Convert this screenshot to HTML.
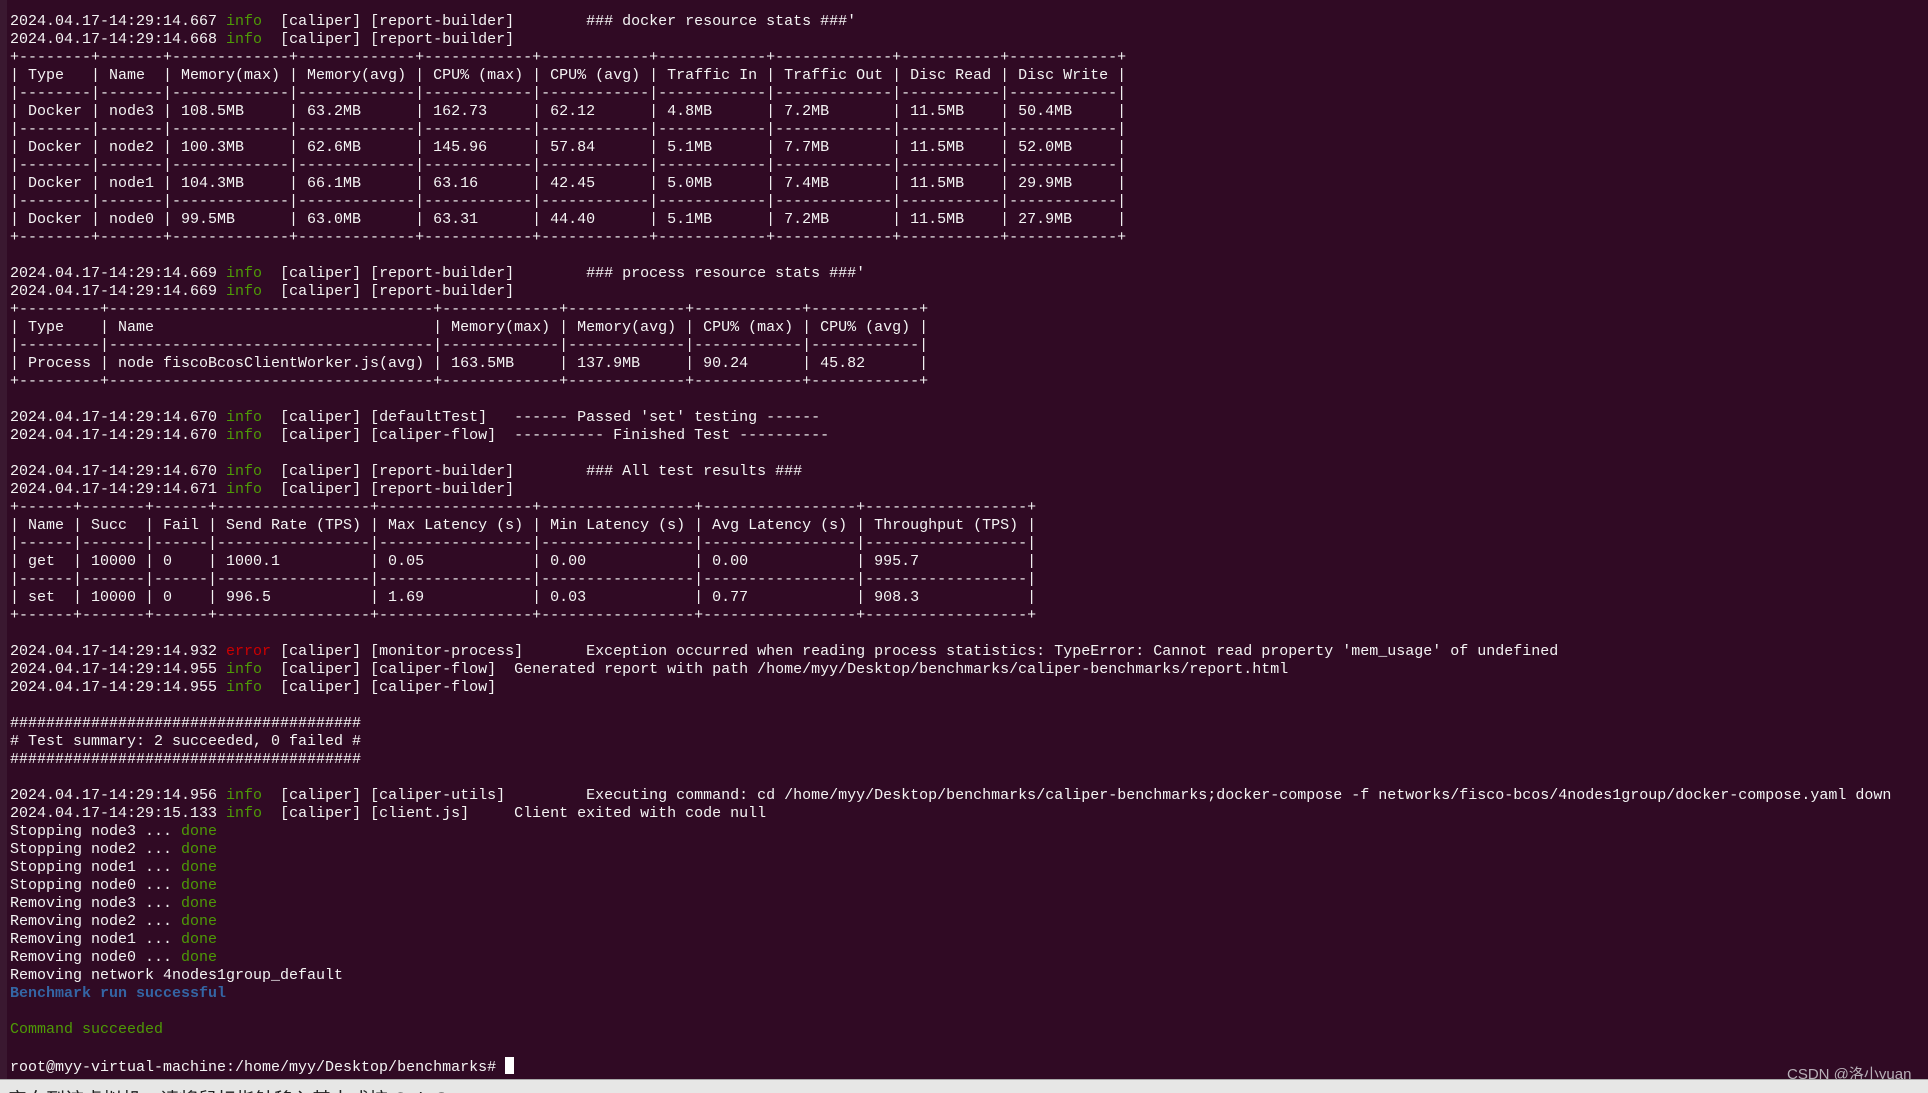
<!DOCTYPE html>
<html><head><meta charset="utf-8"><style>
html,body{margin:0;padding:0;}
body{width:1928px;height:1092px;background:#300a24;position:relative;overflow:hidden;}
.strip{position:absolute;left:0;top:0;width:7px;height:1080px;background:#3a1830;}
pre{position:absolute;left:10px;top:12.5px;margin:0;font-family:"Liberation Mono",monospace;font-size:15px;line-height:18px;color:#f4f4f4;white-space:pre;}
.g{color:#4e9a06}.r{color:#cc0000}.b{color:#3465a4;font-weight:bold}
.cur{display:inline-block;width:9px;height:17px;background:#fff;vertical-align:-3px;}
.bar{position:absolute;left:0;top:1079px;width:1928px;height:13px;background:#e7e7e6;border-top:1px solid #a8a8a8;overflow:hidden;}
.bar span{position:absolute;left:8px;top:5px;font-family:"Liberation Sans","Noto Sans CJK SC",sans-serif;font-size:19px;color:#222;white-space:nowrap;}
.wm{position:absolute;left:1787px;top:1063px;font-family:"Liberation Sans","Noto Sans CJK SC",sans-serif;font-size:15px;color:#b8b0b8;}
</style></head><body>
<div class="strip"></div>
<pre>2024.04.17-14:29:14.667 <span class="g">info</span>  [caliper] [report-builder]        ### docker resource stats ###'
2024.04.17-14:29:14.668 <span class="g">info</span>  [caliper] [report-builder]
+--------+-------+-------------+-------------+------------+------------+------------+-------------+-----------+------------+
| Type   | Name  | Memory(max) | Memory(avg) | CPU% (max) | CPU% (avg) | Traffic In | Traffic Out | Disc Read | Disc Write |
|--------|-------|-------------|-------------|------------|------------|------------|-------------|-----------|------------|
| Docker | node3 | 108.5MB     | 63.2MB      | 162.73     | 62.12      | 4.8MB      | 7.2MB       | 11.5MB    | 50.4MB     |
|--------|-------|-------------|-------------|------------|------------|------------|-------------|-----------|------------|
| Docker | node2 | 100.3MB     | 62.6MB      | 145.96     | 57.84      | 5.1MB      | 7.7MB       | 11.5MB    | 52.0MB     |
|--------|-------|-------------|-------------|------------|------------|------------|-------------|-----------|------------|
| Docker | node1 | 104.3MB     | 66.1MB      | 63.16      | 42.45      | 5.0MB      | 7.4MB       | 11.5MB    | 29.9MB     |
|--------|-------|-------------|-------------|------------|------------|------------|-------------|-----------|------------|
| Docker | node0 | 99.5MB      | 63.0MB      | 63.31      | 44.40      | 5.1MB      | 7.2MB       | 11.5MB    | 27.9MB     |
+--------+-------+-------------+-------------+------------+------------+------------+-------------+-----------+------------+

2024.04.17-14:29:14.669 <span class="g">info</span>  [caliper] [report-builder]        ### process resource stats ###'
2024.04.17-14:29:14.669 <span class="g">info</span>  [caliper] [report-builder]
+---------+------------------------------------+-------------+-------------+------------+------------+
| Type    | Name                               | Memory(max) | Memory(avg) | CPU% (max) | CPU% (avg) |
|---------|------------------------------------|-------------|-------------|------------|------------|
| Process | node fiscoBcosClientWorker.js(avg) | 163.5MB     | 137.9MB     | 90.24      | 45.82      |
+---------+------------------------------------+-------------+-------------+------------+------------+

2024.04.17-14:29:14.670 <span class="g">info</span>  [caliper] [defaultTest]   ------ Passed 'set' testing ------
2024.04.17-14:29:14.670 <span class="g">info</span>  [caliper] [caliper-flow]  ---------- Finished Test ----------

2024.04.17-14:29:14.670 <span class="g">info</span>  [caliper] [report-builder]        ### All test results ###
2024.04.17-14:29:14.671 <span class="g">info</span>  [caliper] [report-builder]
+------+-------+------+-----------------+-----------------+-----------------+-----------------+------------------+
| Name | Succ  | Fail | Send Rate (TPS) | Max Latency (s) | Min Latency (s) | Avg Latency (s) | Throughput (TPS) |
|------|-------|------|-----------------|-----------------|-----------------|-----------------|------------------|
| get  | 10000 | 0    | 1000.1          | 0.05            | 0.00            | 0.00            | 995.7            |
|------|-------|------|-----------------|-----------------|-----------------|-----------------|------------------|
| set  | 10000 | 0    | 996.5           | 1.69            | 0.03            | 0.77            | 908.3            |
+------+-------+------+-----------------+-----------------+-----------------+-----------------+------------------+

2024.04.17-14:29:14.932 <span class="r">error</span> [caliper] [monitor-process]       Exception occurred when reading process statistics: TypeError: Cannot read property 'mem_usage' of undefined
2024.04.17-14:29:14.955 <span class="g">info</span>  [caliper] [caliper-flow]  Generated report with path /home/myy/Desktop/benchmarks/caliper-benchmarks/report.html
2024.04.17-14:29:14.955 <span class="g">info</span>  [caliper] [caliper-flow]

#######################################
# Test summary: 2 succeeded, 0 failed #
#######################################

2024.04.17-14:29:14.956 <span class="g">info</span>  [caliper] [caliper-utils]         Executing command: cd /home/myy/Desktop/benchmarks/caliper-benchmarks;docker-compose -f networks/fisco-bcos/4nodes1group/docker-compose.yaml down
2024.04.17-14:29:15.133 <span class="g">info</span>  [caliper] [client.js]     Client exited with code null
Stopping node3 ... <span class="g">done</span>
Stopping node2 ... <span class="g">done</span>
Stopping node1 ... <span class="g">done</span>
Stopping node0 ... <span class="g">done</span>
Removing node3 ... <span class="g">done</span>
Removing node2 ... <span class="g">done</span>
Removing node1 ... <span class="g">done</span>
Removing node0 ... <span class="g">done</span>
Removing network 4nodes1group_default
<span class="b">Benchmark run successful</span>

<span class="g">Command succeeded</span>

root@myy-virtual-machine:/home/myy/Desktop/benchmarks# <span class="cur"></span></pre>
<div class="wm">CSDN @洛小yuan</div>
<div class="bar"><span>定向到该虚拟机，请将鼠标指针移入其中或按 Ctrl+G</span></div>
</body></html>
